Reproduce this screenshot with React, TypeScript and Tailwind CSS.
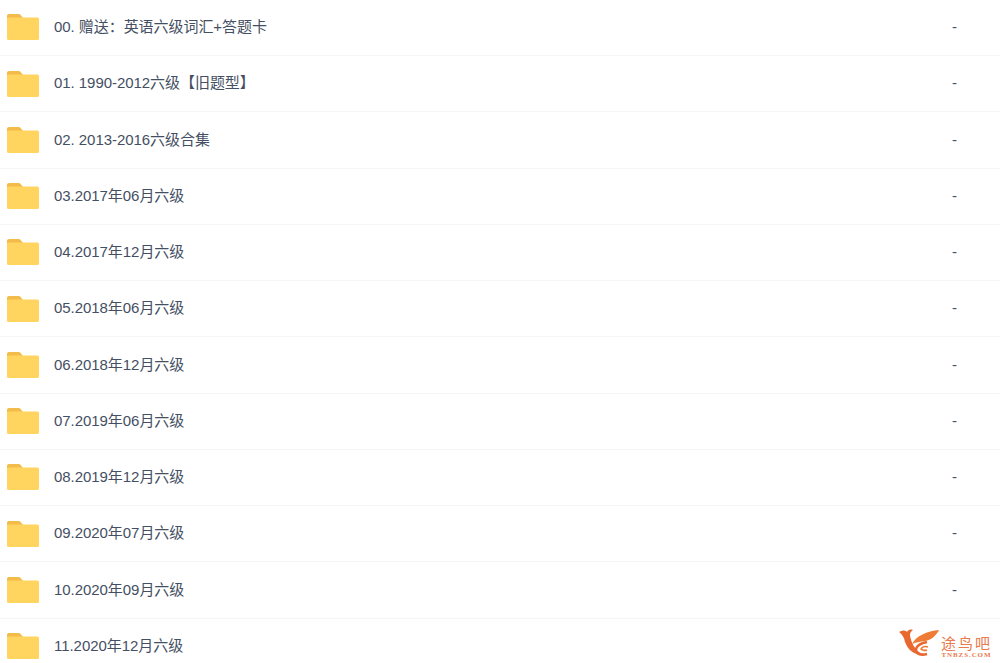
const folders = [
  "00. 赠送\uFF1A英语六级词汇+答题卡",
  "01. 1990-2012六级【旧题型】",
  "02. 2013-2016六级合集",
  "03.2017年06月六级",
  "04.2017年12月六级",
  "05.2018年06月六级",
  "06.2018年12月六级",
  "07.2019年06月六级",
  "08.2019年12月六级",
  "09.2020年07月六级",
  "10.2020年09月六级",
  "11.2020年12月六级",
];

function FolderIcon() {
  return (
    <svg width="32" height="26" viewBox="0 0 32 26" className="shrink-0">
      <path d="M0 2C0 .9.9 0 2 0h9c1.2 0 2.2.5 3 1.4L16 4H1L0 5z" fill="#f2bb4a" />
      <rect x="0" y="3.5" width="32" height="22.5" rx="1.5" fill="#ffd45f" />
    </svg>
  );
}

function Logo() {
  return (
    <div className="absolute right-[8px] bottom-[4px] flex items-end gap-[1px]">
      <svg width="41" height="31" viewBox="0 0 41 31">
        <path d="M0 4c3-2 6-2 8 0 1-2 3-3 6-2-2 1-3 3-3 5 1 8 5 15 13 20-9 0-15-5-18-13C5 9 3 6 0 4z" fill="#e9682f" />
        <path d="M13 16C17 8 28 3 40 2c-3 6-8 10-14 11-5 1-9 1-13 3z" fill="#ee7b36" />
        <path d="M28 14c-5 1-10 3-11 7-1 4 4 7 11 5" fill="none" stroke="#e9682f" strokeWidth="2.6" />
        <path d="M29 19c-3-1-6 0-7 2 1 1 4 2 6 1" fill="none" stroke="#ee7b36" strokeWidth="1.6" />
      </svg>
      <div className="flex flex-col items-center gap-[2px] text-[#e87a4c]">
        <span className="text-[15px] leading-[15px] tracking-[2px] font-['Noto_Sans_CJK_SC',sans-serif]">途鸟吧</span>
        <span className="text-[7px] leading-[7px] font-bold tracking-[0.9px] font-['Liberation_Serif',serif]">TNBZS.COM</span>
      </div>
    </div>
  );
}

export default function App() {
  return (
    <div className="relative h-[663px] w-full overflow-hidden bg-white font-['Liberation_Sans','Noto_Sans_CJK_SC',sans-serif] text-[15px] text-[#454f63]">
      <div className="-mt-[0.25px]">
        {folders.map((name, i) => (
          <div key={name} className="flex h-[56.25px] items-center border-b border-[#f5f6f7] pl-[7px]">
            <FolderIcon />
            <span className="ml-[15px] flex-1 tracking-[-0.05px]">{name}</span>
            {i < folders.length - 1 && <span className="mr-[43px]">-</span>}
          </div>
        ))}
      </div>
      <Logo />
    </div>
  );
}
